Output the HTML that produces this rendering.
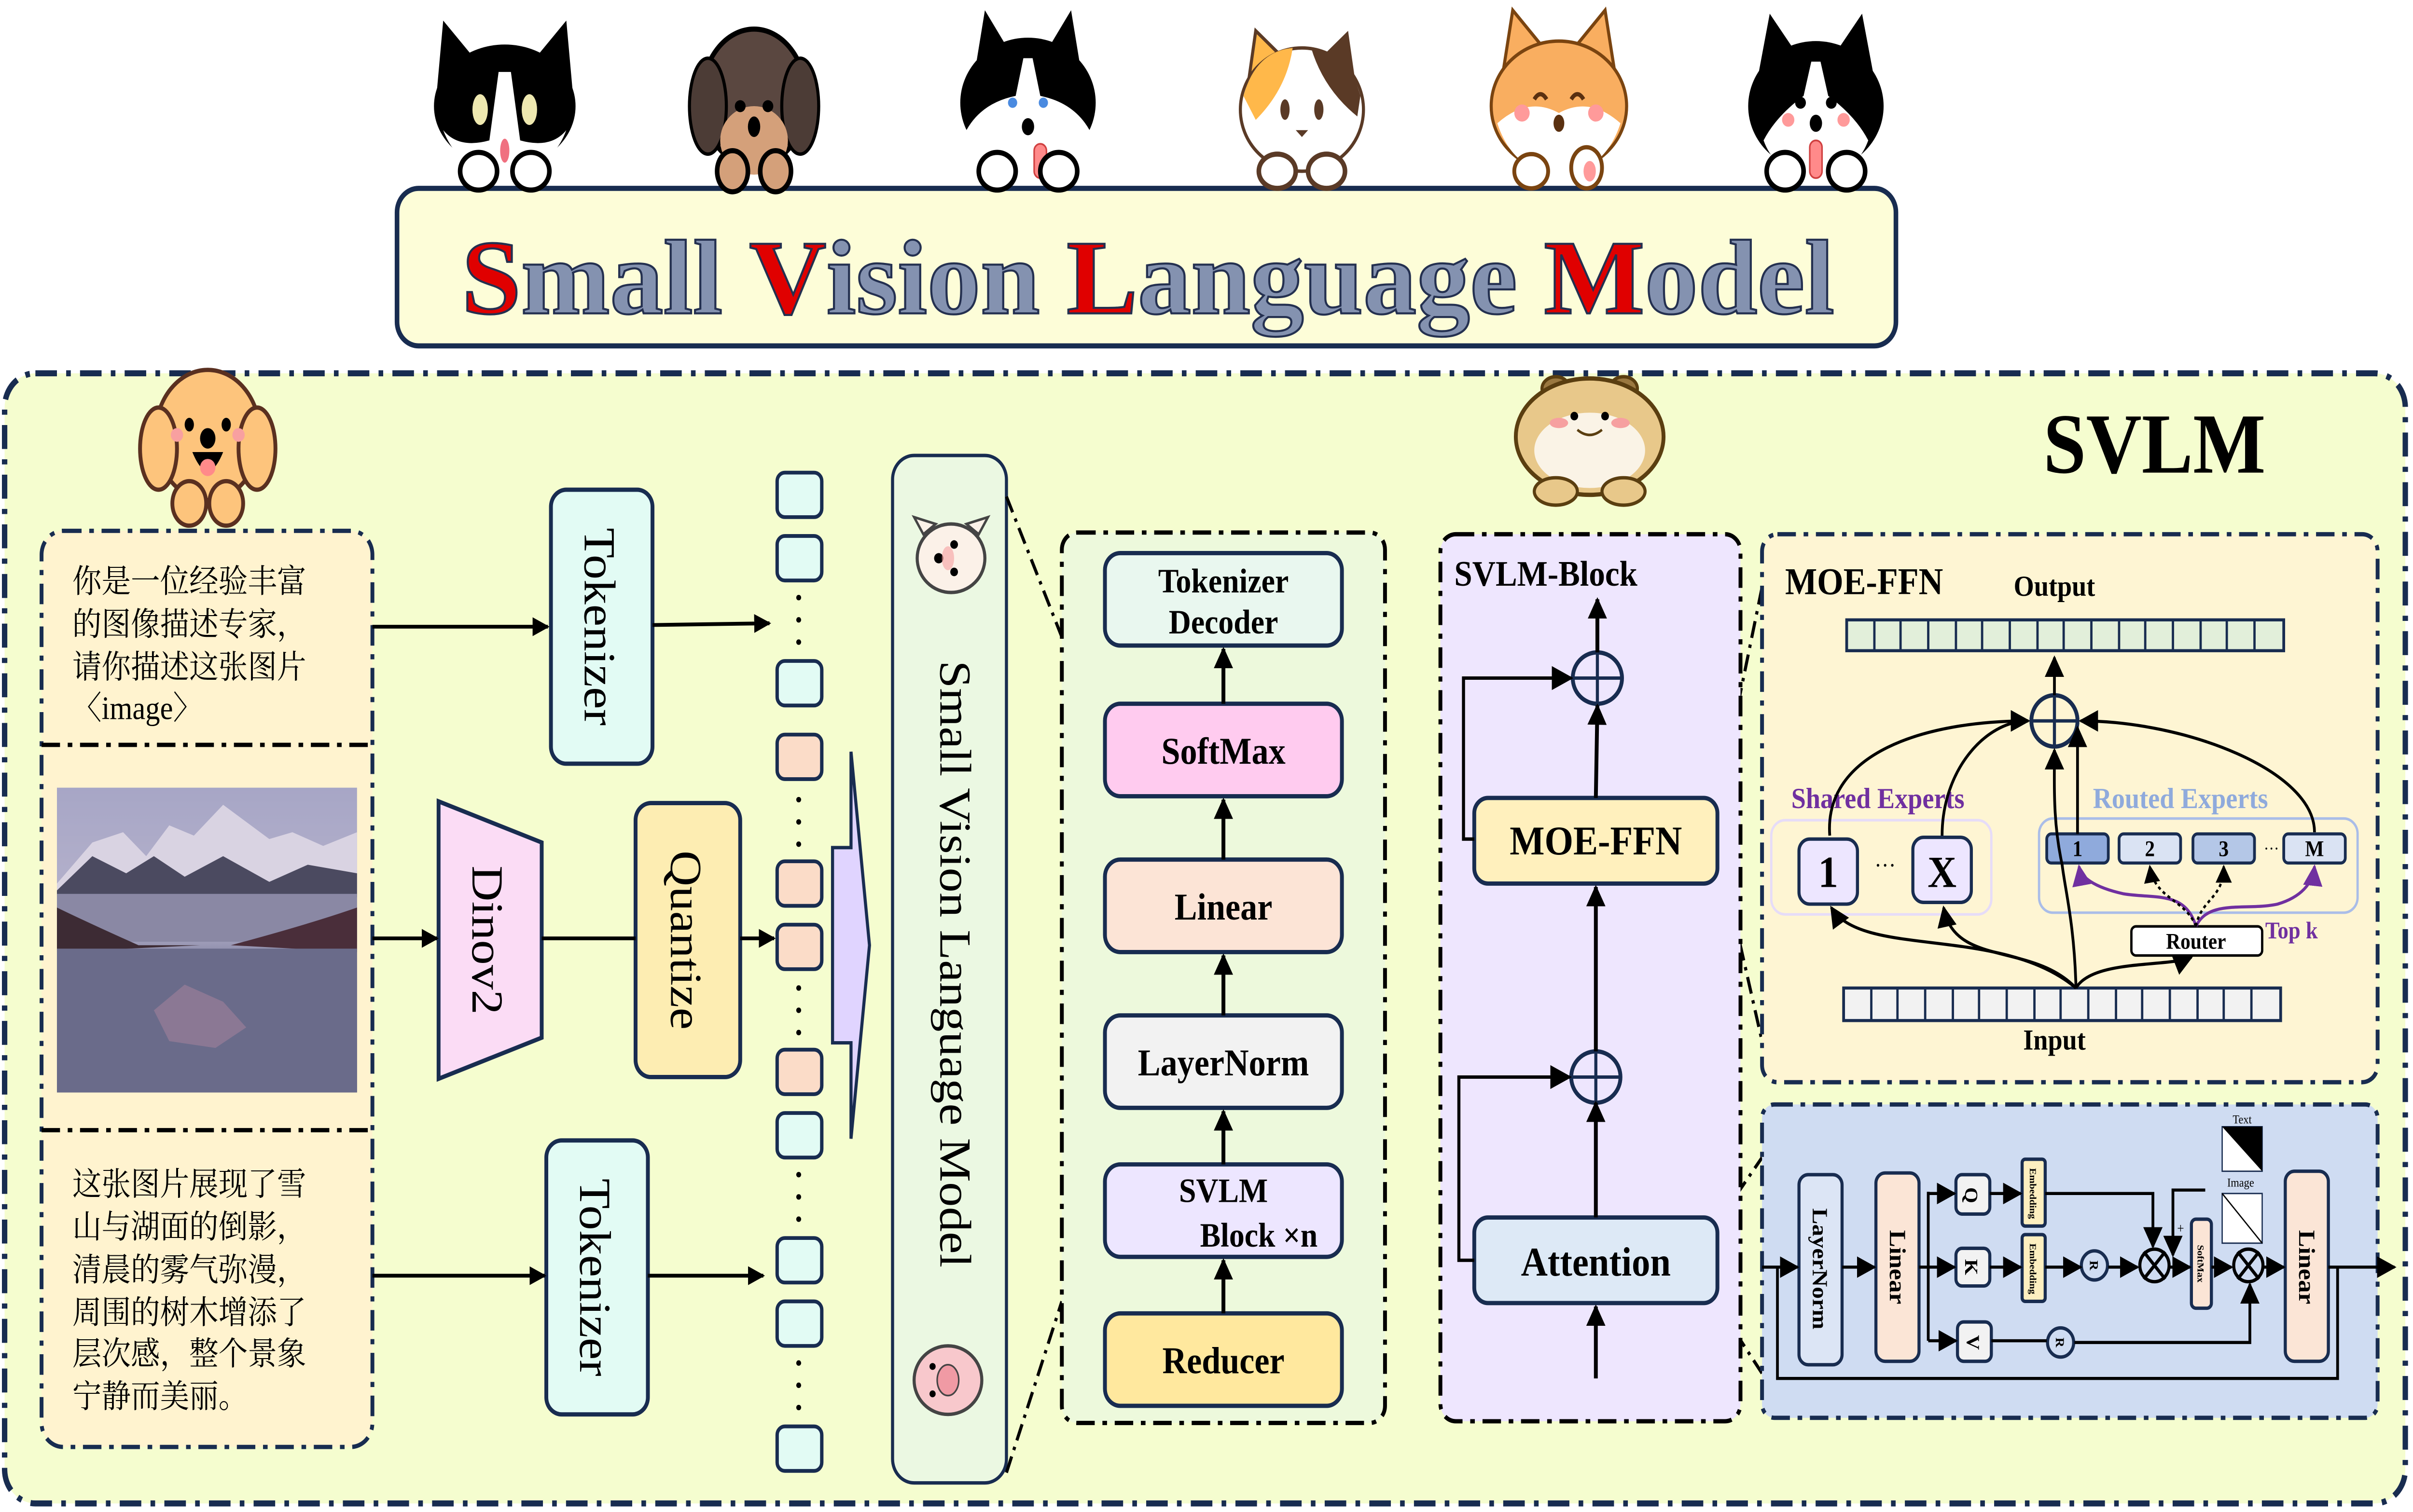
<!DOCTYPE html>
<html><head><meta charset="utf-8">
<style>
html,body{margin:0;padding:0;background:#fff;overflow:hidden;width:100%;height:100%;}
svg{display:block;position:fixed;left:0;top:0;width:100vw;height:100vh;}
text{font-family:"Liberation Serif","Noto Serif CJK SC",serif;}
.cjk{font-family:"Liberation Serif","Noto Serif CJK SC","Noto Sans CJK SC",serif;}
</style></head>
<body>
<svg viewBox="0 0 1568 883" preserveAspectRatio="none" xmlns="http://www.w3.org/2000/svg">
<defs>
<marker id="ah" viewBox="0 0 10 10" refX="9" refY="5" markerWidth="5" markerHeight="5" orient="auto"><path d="M0,0 L10,5 L0,10 z" fill="#000"/></marker>
<marker id="ahs" viewBox="0 0 10 10" refX="9" refY="5" markerWidth="7" markerHeight="7" orient="auto"><path d="M0,0 L10,5 L0,10 z" fill="#000"/></marker>
<marker id="ahp" viewBox="0 0 10 10" refX="9" refY="5" markerWidth="7" markerHeight="7" orient="auto"><path d="M0,0 L10,5 L0,10 z" fill="#7030a0"/></marker>
<linearGradient id="sky" x1="0" y1="0" x2="0" y2="1">
<stop offset="0" stop-color="#a7a6c6"/><stop offset="0.45" stop-color="#b7b3cc"/><stop offset="0.55" stop-color="#8a8aa8"/><stop offset="0.75" stop-color="#6e6f8e"/><stop offset="1" stop-color="#4b4d6c"/></linearGradient>
</defs>

<rect x="3" y="218" width="1560" height="660" rx="20" fill="#f5fdcf" stroke="#182c50" stroke-width="3.5" stroke-dasharray="14 6 3 6"/>

<rect x="258" y="110" width="974" height="92" rx="14" fill="#fdfdd8" stroke="#182c50" stroke-width="3"/>
<text x="300" y="183" font-size="62" font-weight="bold" textLength="892" lengthAdjust="spacingAndGlyphs" stroke="#243050" stroke-width="1.2"><tspan fill="#e00000">S</tspan><tspan fill="#8492b0">mall </tspan><tspan fill="#e00000">V</tspan><tspan fill="#8492b0">ision </tspan><tspan fill="#e00000">L</tspan><tspan fill="#8492b0">anguage </tspan><tspan fill="#e00000">M</tspan><tspan fill="#8492b0">odel</tspan></text>

<g transform="translate(328,62)">
<path d="M-44,-10 L-40,-50 L-18,-26 Z M44,-10 L40,-50 L18,-26 Z" fill="#000"/>
<ellipse cx="0" cy="0" rx="46" ry="36" fill="#000"/>
<path d="M-4,-20 L4,-20 L10,20 Q30,25 40,14 Q30,38 0,40 Q-30,38 -40,14 Q-30,25 -10,20 Z" fill="#fff"/>
<ellipse cx="-16" cy="2" rx="5" ry="9" fill="#eee8b0"/><ellipse cx="16" cy="2" rx="5" ry="9" fill="#eee8b0"/>
<ellipse cx="0" cy="26" rx="3" ry="7" fill="#f07080"/>
<ellipse cx="-17" cy="38" rx="12" ry="11" fill="#fff" stroke="#000" stroke-width="3"/><ellipse cx="17" cy="38" rx="12" ry="11" fill="#fff" stroke="#000" stroke-width="3"/>
</g>
<g transform="translate(490,62)">
<ellipse cx="0" cy="-5" rx="34" ry="40" fill="#5a4740" stroke="#000" stroke-width="3"/>
<ellipse cx="-30" cy="0" rx="12" ry="28" fill="#4c3c36" stroke="#000" stroke-width="2"/><ellipse cx="30" cy="0" rx="12" ry="28" fill="#4c3c36" stroke="#000" stroke-width="2"/>
<ellipse cx="0" cy="20" rx="22" ry="20" fill="#d4a07a"/>
<circle cx="-9" cy="0" r="3.5" fill="#000"/><circle cx="9" cy="0" r="3.5" fill="#000"/>
<ellipse cx="0" cy="12" rx="4" ry="6" fill="#000"/>
<ellipse cx="-14" cy="38" rx="10" ry="12" fill="#d4a07a" stroke="#000" stroke-width="3"/><ellipse cx="14" cy="38" rx="10" ry="12" fill="#d4a07a" stroke="#000" stroke-width="3"/>
</g>
<g transform="translate(668,60)">
<path d="M-36,-10 L-28,-54 L-12,-30 Z M36,-10 L28,-54 L12,-30 Z" fill="#000"/>
<ellipse cx="0" cy="0" rx="44" ry="38" fill="#000"/>
<path d="M-3,-26 L3,-26 L8,-4 Q30,0 40,16 Q30,40 0,42 Q-30,40 -40,16 Q-30,0 -8,-4 Z" fill="#fff"/>
<circle cx="-10" cy="0" r="3" fill="#4a8ae0"/><circle cx="10" cy="0" r="3" fill="#4a8ae0"/>
<ellipse cx="0" cy="14" rx="4" ry="5" fill="#000"/>
<rect x="4" y="24" width="8" height="20" rx="4" fill="#ff8a8a" stroke="#d04040"/>
<ellipse cx="-20" cy="40" rx="12" ry="11" fill="#fff" stroke="#000" stroke-width="3"/><ellipse cx="20" cy="40" rx="12" ry="11" fill="#fff" stroke="#000" stroke-width="3"/>
</g>
<g transform="translate(846,62)">
<path d="M-36,-6 L-30,-44 L-12,-28 Z" fill="#ffb84a" stroke="#5a3a26" stroke-width="2"/><path d="M36,-6 L30,-44 L12,-28 Z" fill="#5a3a26"/>
<ellipse cx="0" cy="2" rx="40" ry="36" fill="#fff" stroke="#5a3a26" stroke-width="2"/>
<path d="M-38,-6 Q-30,-32 -6,-34 Q-10,-10 -30,8 Z" fill="#ffb84a"/><path d="M38,-6 Q30,-32 6,-34 Q14,-10 36,6 Z" fill="#5a3a26"/>
<ellipse cx="-11" cy="2" rx="3" ry="6" fill="#5a3a26"/><ellipse cx="11" cy="2" rx="3" ry="6" fill="#5a3a26"/>
<path d="M-4,14 L4,14 L0,18 Z" fill="#5a3a26"/>
<ellipse cx="-16" cy="38" rx="12" ry="10" fill="#fff" stroke="#5a3a26" stroke-width="3"/><ellipse cx="16" cy="38" rx="12" ry="10" fill="#fff" stroke="#5a3a26" stroke-width="3"/>
</g>
<g transform="translate(1013,58)">
<path d="M-38,-6 L-30,-52 L-10,-30 Z M38,-6 L30,-52 L10,-30 Z" fill="#f9ae60" stroke="#7a4410" stroke-width="2"/>
<ellipse cx="0" cy="4" rx="44" ry="38" fill="#f9ae60" stroke="#7a4410" stroke-width="2"/>
<path d="M-40,14 Q-20,-2 0,8 Q20,-2 40,14 Q30,42 0,44 Q-30,42 -40,14 Z" fill="#fff"/>
<path d="M-16,0 q4,-6 8,0" stroke="#5a3010" stroke-width="2.5" fill="none"/><path d="M8,0 q4,-6 8,0" stroke="#5a3010" stroke-width="2.5" fill="none"/>
<circle cx="-24" cy="8" r="5" fill="#ff9a9a"/><circle cx="24" cy="8" r="5" fill="#ff9a9a"/>
<ellipse cx="0" cy="14" rx="3.5" ry="5" fill="#5a3010"/>
<ellipse cx="-18" cy="42" rx="11" ry="10" fill="#fff" stroke="#7a4410" stroke-width="2.5"/><ellipse cx="18" cy="40" rx="10" ry="12" fill="#fff" stroke="#7a4410" stroke-width="2.5"/>
<ellipse cx="20" cy="42" rx="4" ry="6" fill="#ff9a9a"/>
</g>
<g transform="translate(1180,60)">
<path d="M-40,-4 L-30,-52 L-12,-28 Z M40,-4 L30,-52 L12,-28 Z" fill="#000"/>
<ellipse cx="0" cy="2" rx="44" ry="38" fill="#000"/>
<path d="M-3,-24 L3,-24 L8,-4 Q26,8 34,22 Q26,42 0,44 Q-26,42 -34,22 Q-26,8 -8,-4 Z" fill="#fff"/>
<circle cx="-10" cy="0" r="3.5" fill="#000"/><circle cx="10" cy="0" r="3.5" fill="#000"/>
<circle cx="-18" cy="10" r="4" fill="#ff9a9a"/><circle cx="18" cy="10" r="4" fill="#ff9a9a"/>
<ellipse cx="0" cy="12" rx="4" ry="5" fill="#000"/>
<rect x="-4" y="22" width="8" height="22" rx="4" fill="#ff8a8a" stroke="#d04040"/>
<ellipse cx="-20" cy="40" rx="12" ry="11" fill="#fff" stroke="#000" stroke-width="3"/><ellipse cx="20" cy="40" rx="12" ry="11" fill="#fff" stroke="#000" stroke-width="3"/>
</g>

<!-- dog -->
<g transform="translate(135,258)">
<ellipse cx="0" cy="-4" rx="34" ry="38" fill="#fdc47c" stroke="#5a3020" stroke-width="2.5"/>
<ellipse cx="-32" cy="4" rx="12" ry="24" fill="#fdc47c" stroke="#5a3020" stroke-width="2.5"/><ellipse cx="32" cy="4" rx="12" ry="24" fill="#fdc47c" stroke="#5a3020" stroke-width="2.5"/>
<ellipse cx="-12" cy="-10" rx="3" ry="4" fill="#000"/><ellipse cx="12" cy="-10" rx="3" ry="4" fill="#000"/>
<circle cx="-20" cy="-4" r="4" fill="#f8a0a0"/><circle cx="20" cy="-4" r="4" fill="#f8a0a0"/>
<ellipse cx="0" cy="-2" rx="5" ry="6" fill="#000"/>
<path d="M-10,6 Q0,28 10,6 Z" fill="#000"/><ellipse cx="0" cy="15" rx="5" ry="5" fill="#ff8a8a"/>
<ellipse cx="-12" cy="36" rx="11" ry="13" fill="#fdc47c" stroke="#5a3020" stroke-width="2.5"/><ellipse cx="12" cy="36" rx="11" ry="13" fill="#fdc47c" stroke="#5a3020" stroke-width="2.5"/>
</g>

<text x="1400" y="276" font-size="50" font-weight="bold" text-anchor="middle">SVLM</text>

<rect x="27" y="310" width="215" height="535" rx="14" fill="#fff3cf" stroke="#182c50" stroke-width="2.5" stroke-dasharray="12 5 3 5"/>
<line x1="27" y1="435" x2="242" y2="435" stroke="#000" stroke-width="2.5" stroke-dasharray="12 5 3 5"/>
<line x1="27" y1="660" x2="242" y2="660" stroke="#000" stroke-width="2.5" stroke-dasharray="12 5 3 5"/>
<g font-size="19" fill="#000">
<text x="47" y="346" class="cjk">你是一位经验丰富</text>
<text x="47" y="371" class="cjk">的图像描述专家，</text>
<text x="47" y="396" class="cjk">请你描述这张图片</text>
<text x="47" y="420" class="cjk">〈image〉</text>
<text x="47" y="698" class="cjk">这张图片展现了雪</text>
<text x="47" y="723" class="cjk">山与湖面的倒影，</text>
<text x="47" y="748" class="cjk">清晨的雾气弥漫，</text>
<text x="47" y="773" class="cjk">周围的树木增添了</text>
<text x="47" y="797" class="cjk">层次感，整个景象</text>
<text x="47" y="822" class="cjk">宁静而美丽。</text>
</g>
<rect x="37" y="460" width="195" height="178" fill="url(#sky)"/>
<path d="M37,516 L60,492 L80,486 L95,500 L110,482 L126,488 L145,470 L160,480 L175,490 L190,486 L210,494 L232,486 L232,522 L37,522 Z" fill="#d9d3e2"/>
<path d="M37,520 L60,500 L82,510 L100,500 L120,512 L145,500 L175,515 L200,505 L232,510 L232,524 L37,524 Z" fill="#4b4a60"/>
<path d="M37,522 L232,522 L232,550 L37,550 Z" fill="#8a88a4"/>
<path d="M37,530 Q60,540 90,552 L130,552 L37,556 Z" fill="#3d2b34"/>
<path d="M232,530 Q200,540 150,552 L232,556 Z" fill="#4a2e3a"/>
<rect x="37" y="554" width="195" height="84" fill="#6a6b8a"/>
<path d="M100,590 L120,575 L145,585 L160,600 L140,612 L110,608 Z" fill="#9a7d98" opacity="0.7"/>

<rect x="358" y="286" width="66" height="160" rx="10" fill="#e2fbf4" stroke="#182c50" stroke-width="2.5"/>
<text transform="translate(380,366) rotate(90)" font-size="29" text-anchor="middle">Tokenizer</text>
<rect x="355" y="666" width="66" height="160" rx="10" fill="#e2fbf4" stroke="#182c50" stroke-width="2.5"/>
<text transform="translate(377,746) rotate(90)" font-size="29" text-anchor="middle">Tokenizer</text>
<polygon points="285,468 352,492 352,606 285,630" fill="#fbdcf5" stroke="#182c50" stroke-width="2.5"/>
<text transform="translate(307,549) rotate(90)" font-size="29" text-anchor="middle">Dinov2</text>
<rect x="413" y="469" width="68" height="160" rx="10" fill="#fdedb2" stroke="#182c50" stroke-width="2.5"/>
<text transform="translate(436,549) rotate(90)" font-size="29" text-anchor="middle">Quantize</text>

<g stroke="#000" stroke-width="2.2" fill="none">
<line x1="242" y1="366" x2="356" y2="366" marker-end="url(#ah)"/>
<line x1="424" y1="365" x2="500" y2="364" marker-end="url(#ah)"/>
<line x1="242" y1="548" x2="284" y2="548" marker-end="url(#ah)"/>
<line x1="352" y1="548" x2="413" y2="548"/>
<line x1="481" y1="548" x2="503" y2="548" marker-end="url(#ah)"/>
<line x1="242" y1="745" x2="354" y2="745" marker-end="url(#ah)"/>
<line x1="421" y1="745" x2="496" y2="745" marker-end="url(#ah)"/>
</g>

<g stroke="#182c50" stroke-width="2.2">
<rect x="505" y="276" width="29" height="26" rx="5" fill="#e2fbf4"/>
<rect x="505" y="313" width="29" height="26" rx="5" fill="#e2fbf4"/>
<rect x="505" y="386" width="29" height="26" rx="5" fill="#e2fbf4"/>
<rect x="505" y="429" width="29" height="26" rx="5" fill="#fbdcc8"/>
<rect x="505" y="503" width="29" height="26" rx="5" fill="#fbdcc8"/>
<rect x="505" y="540" width="29" height="26" rx="5" fill="#fbdcc8"/>
<rect x="505" y="613" width="29" height="26" rx="5" fill="#fbdcc8"/>
<rect x="505" y="650" width="29" height="26" rx="5" fill="#e2fbf4"/>
<rect x="505" y="723" width="29" height="26" rx="5" fill="#e2fbf4"/>
<rect x="505" y="760" width="29" height="26" rx="5" fill="#e2fbf4"/>
<rect x="505" y="833" width="29" height="26" rx="5" fill="#e2fbf4"/>
</g>
<g fill="#000">
<circle cx="519" cy="349" r="1.6"/><circle cx="519" cy="362" r="1.6"/><circle cx="519" cy="375" r="1.6"/>
<circle cx="519" cy="467" r="1.6"/><circle cx="519" cy="480" r="1.6"/><circle cx="519" cy="493" r="1.6"/>
<circle cx="519" cy="577" r="1.6"/><circle cx="519" cy="590" r="1.6"/><circle cx="519" cy="603" r="1.6"/>
<circle cx="519" cy="686" r="1.6"/><circle cx="519" cy="699" r="1.6"/><circle cx="519" cy="712" r="1.6"/>
<circle cx="519" cy="796" r="1.6"/><circle cx="519" cy="809" r="1.6"/><circle cx="519" cy="822" r="1.6"/>
</g>
<polygon points="541,495 553,495 553,439 565,552 553,665 553,609 541,609" fill="#e0d4ff" stroke="#182c50" stroke-width="2"/>

<rect x="580" y="266" width="74" height="600" rx="14" fill="#ebf8e2" stroke="#182c50" stroke-width="2"/>
<text transform="translate(611,563) rotate(90)" font-size="29" text-anchor="middle">Small Vision Language Model</text>
<g transform="translate(618,326)">
<path d="M-18,-14 L-24,-24 L-10,-20 Z M18,-14 L24,-24 L10,-20 Z" fill="#fbf1e8" stroke="#444" stroke-width="1.5"/>
<ellipse cx="0" cy="0" rx="22" ry="20" fill="#fbf1e8" stroke="#444" stroke-width="2"/>
<circle cx="2" cy="-8" r="2.5" fill="#000"/><circle cx="2" cy="8" r="2.5" fill="#000"/>
<circle cx="-8" cy="0" r="3" fill="#000"/><ellipse cx="-2" cy="0" rx="4" ry="7" fill="#f6a0a0" opacity="0.6"/>
</g>
<g transform="translate(616,806)">
<ellipse cx="0" cy="0" rx="22" ry="20" fill="#f8c8cc" stroke="#444" stroke-width="2"/>
<ellipse cx="0" cy="0" rx="7" ry="9" fill="#f09aa4" stroke="#444"/>
<circle cx="-10" cy="-8" r="2" fill="#000"/><circle cx="-10" cy="8" r="2" fill="#000"/>
</g>

<g stroke="#000" stroke-width="2" stroke-dasharray="10 4 2 4" fill="none">
<line x1="654" y1="290" x2="690" y2="372"/>
<line x1="654" y1="860" x2="690" y2="760"/>
<line x1="1116" y1="470" x2="1145" y2="343"/>
<line x1="1116" y1="493" x2="1145" y2="608"/>
<line x1="1116" y1="714" x2="1145" y2="676"/>
<line x1="1116" y1="762" x2="1145" y2="802"/>
</g>

<rect x="690" y="311" width="210" height="520" rx="10" fill="#edf9dc" stroke="#000" stroke-width="2.5" stroke-dasharray="12 5 3 5"/>
<g stroke="#182c50" stroke-width="2.5">
<rect x="718" y="323" width="154" height="54" rx="10" fill="#e9f7ef"/>
<rect x="718" y="411" width="154" height="54" rx="10" fill="#ffcbef"/>
<rect x="718" y="502" width="154" height="54" rx="10" fill="#fce4d6"/>
<rect x="718" y="593" width="154" height="54" rx="10" fill="#f2f2f2"/>
<rect x="718" y="680" width="154" height="54" rx="10" fill="#ede6ff"/>
<rect x="718" y="767" width="154" height="54" rx="10" fill="#ffe89e"/>
</g>
<g stroke="#000" stroke-width="2.5" marker-end="url(#ah)">
<line x1="795" y1="411" x2="795" y2="379"/>
<line x1="795" y1="502" x2="795" y2="467"/>
<line x1="795" y1="593" x2="795" y2="558"/>
<line x1="795" y1="680" x2="795" y2="649"/>
<line x1="795" y1="767" x2="795" y2="736"/>
</g>
<g font-weight="bold" text-anchor="middle">
<text x="795" y="346" font-size="20">Tokenizer</text>
<text x="795" y="370" font-size="20">Decoder</text>
<text x="795" y="446" font-size="22">SoftMax</text>
<text x="795" y="537" font-size="22">Linear</text>
<text x="795" y="628" font-size="22">LayerNorm</text>
<text x="795" y="702" font-size="20">SVLM</text>
<text x="818" y="728" font-size="20">Block  ×n</text>
<text x="795" y="802" font-size="22">Reducer</text>
</g>

<g transform="translate(1033,265)">
<ellipse cx="-22" cy="-38" rx="9" ry="7" fill="#9a7840" stroke="#5a3e10" stroke-width="2"/><ellipse cx="22" cy="-38" rx="9" ry="7" fill="#9a7840" stroke="#5a3e10" stroke-width="2"/>
<ellipse cx="0" cy="-10" rx="48" ry="34" fill="#e8c88a" stroke="#5a3e10" stroke-width="2.5"/>
<ellipse cx="0" cy="-2" rx="36" ry="22" fill="#faf3e6"/>
<circle cx="-10" cy="-22" r="2.5" fill="#000"/><circle cx="10" cy="-22" r="2.5" fill="#000"/>
<ellipse cx="-20" cy="-18" rx="6" ry="3" fill="#f6a0a0"/><ellipse cx="20" cy="-18" rx="6" ry="3" fill="#f6a0a0"/>
<path d="M-8,-14 q8,6 16,0" stroke="#5a3e10" stroke-width="1.5" fill="none"/>
<ellipse cx="-22" cy="22" rx="14" ry="8" fill="#e8c88a" stroke="#5a3e10" stroke-width="2"/><ellipse cx="22" cy="22" rx="14" ry="8" fill="#e8c88a" stroke="#5a3e10" stroke-width="2"/>
</g>

<rect x="936" y="312" width="195" height="518" rx="10" fill="#eee6fe" stroke="#000" stroke-width="2.5" stroke-dasharray="12 5 3 5"/>
<text x="945" y="342" font-size="21" font-weight="bold">SVLM-Block</text>
<rect x="958" y="466" width="158" height="50" rx="9" fill="#fff0bd" stroke="#182c50" stroke-width="2.5"/>
<text x="1037" y="499" font-size="24" font-weight="bold" text-anchor="middle">MOE-FFN</text>
<rect x="958" y="711" width="158" height="50" rx="9" fill="#dde9f6" stroke="#182c50" stroke-width="2.5"/>
<text x="1037" y="745" font-size="24" font-weight="bold" text-anchor="middle">Attention</text>
<ellipse cx="1038" cy="396" rx="16" ry="15" fill="none" stroke="#182c50" stroke-width="2.5"/>
<line x1="1022" y1="396" x2="1054" y2="396" stroke="#182c50" stroke-width="2"/>
<line x1="1038" y1="381" x2="1038" y2="411" stroke="#182c50" stroke-width="2"/>
<ellipse cx="1037" cy="629" rx="16" ry="15" fill="none" stroke="#182c50" stroke-width="2.5"/>
<line x1="1021" y1="629" x2="1053" y2="629" stroke="#182c50" stroke-width="2"/>
<line x1="1037" y1="614" x2="1037" y2="644" stroke="#182c50" stroke-width="2"/>
<g stroke="#000" stroke-width="2.5" fill="none">
<line x1="1037" y1="805" x2="1037" y2="763" marker-end="url(#ah)"/>
<line x1="1037" y1="711" x2="1037" y2="644" marker-end="url(#ah)"/>
<line x1="1037" y1="614" x2="1037" y2="518" marker-end="url(#ah)"/>
<line x1="1037" y1="466" x2="1038" y2="412" marker-end="url(#ah)"/>
<line x1="1038" y1="381" x2="1038" y2="350" marker-end="url(#ah)"/>
<polyline points="958,736 948,736 948,629 1020,629" stroke-width="2" marker-end="url(#ahs)"/>
<polyline points="958,490 951,490 951,396 1021,396" stroke-width="2" marker-end="url(#ahs)"/>
</g>

<rect x="1145" y="312" width="400" height="320" rx="10" fill="#fef5d3" stroke="#182c50" stroke-width="2.5" stroke-dasharray="12 5 3 5"/>
<text x="1160" y="347" font-size="22" font-weight="bold">MOE-FFN</text>
<text x="1335" y="348" font-size="17" font-weight="bold" text-anchor="middle">Output</text>
<g stroke="#182c50" stroke-width="1.8">
<rect x="1200" y="362" width="284" height="18" fill="#e2efda"/>
<rect x="1198" y="577" width="284" height="19" fill="#f2f2f2"/>
</g>
<g stroke="#182c50" stroke-width="1.5">
<path d="M1218,362v18M1235,362v18M1253,362v18M1271,362v18M1288,362v18M1306,362v18M1324,362v18M1341,362v18M1359,362v18M1377,362v18M1394,362v18M1412,362v18M1430,362v18M1447,362v18M1465,362v18"/>
<path d="M1216,577v19M1233,577v19M1251,577v19M1269,577v19M1286,577v19M1304,577v19M1322,577v19M1339,577v19M1357,577v19M1375,577v19M1392,577v19M1410,577v19M1428,577v19M1445,577v19M1463,577v19"/>
</g>
<circle cx="1335" cy="421" r="15" fill="none" stroke="#182c50" stroke-width="2.5"/>
<line x1="1320" y1="421" x2="1350" y2="421" stroke="#182c50" stroke-width="2"/><line x1="1335" y1="406" x2="1335" y2="436" stroke="#182c50" stroke-width="2"/>
<text x="1164" y="472" font-size="17" font-weight="bold" fill="#7030a0">Shared Experts</text>
<text x="1360" y="472" font-size="17" font-weight="bold" fill="#8faadc">Routed Experts</text>
<rect x="1151" y="479" width="143" height="55" rx="9" fill="none" stroke="#e6dcf8" stroke-width="1.5"/>
<rect x="1325" y="478" width="207" height="55" rx="9" fill="none" stroke="#aabde8" stroke-width="1.5"/>
<rect x="1169" y="490" width="38" height="38" rx="7" fill="#ede6ff" stroke="#182c50" stroke-width="2"/>
<rect x="1243" y="489" width="38" height="38" rx="7" fill="#ede6ff" stroke="#182c50" stroke-width="2"/>
<text x="1188" y="518" font-size="26" font-weight="bold" text-anchor="middle">1</text>
<text x="1262" y="518" font-size="26" font-weight="bold" text-anchor="middle">X</text>
<text x="1225" y="510" font-size="14" text-anchor="middle">···</text>
<g stroke="#182c50" stroke-width="1.8">
<rect x="1330" y="487" width="40" height="17" rx="3" fill="#8faadc"/>
<rect x="1377" y="487" width="40" height="17" rx="3" fill="#dae3f3"/>
<rect x="1425" y="487" width="40" height="17" rx="3" fill="#b4c7e7"/>
<rect x="1484" y="487" width="40" height="17" rx="3" fill="#dae3f3"/>
</g>
<g font-size="13" font-weight="bold" text-anchor="middle">
<text x="1350" y="500">1</text><text x="1397" y="500">2</text><text x="1445" y="500">3</text><text x="1504" y="500">M</text>
</g>
<text x="1476" y="499" font-size="10" text-anchor="middle">···</text>
<rect x="1385" y="541" width="85" height="17" rx="3" fill="#fff" stroke="#000" stroke-width="1.5"/>
<text x="1427" y="554" font-size="13" font-weight="bold" text-anchor="middle">Router</text>
<text x="1472" y="548" font-size="14" font-weight="bold" fill="#7030a0">Top k</text>
<text x="1335" y="613" font-size="17" font-weight="bold" text-anchor="middle">Input</text>
<g stroke="#000" stroke-width="1.8" fill="none">
<line x1="1335" y1="406" x2="1335" y2="384" marker-end="url(#ahs)"/>
<path d="M1349,577 C1300,540 1210,560 1190,530" marker-end="url(#ahs)"/>
<path d="M1349,577 C1320,550 1270,565 1263,530" marker-end="url(#ahs)"/>
<path d="M1349,577 C1360,560 1410,565 1424,559" marker-end="url(#ahs)"/>
<path d="M1349,577 C1348,540 1342,520 1340,505 C1334,480 1335,460 1335,438" marker-end="url(#ahs)"/>
<path d="M1350,487 L1350,425" marker-end="url(#ahs)"/>
<path d="M1189,488 C1185,440 1250,421 1318,421" marker-end="url(#ahs)"/>
<path d="M1262,488 C1262,450 1290,421 1318,421" marker-end="url(#ahs)"/>
<path d="M1504,486 C1504,450 1420,421 1352,421" marker-end="url(#ahs)"/>
</g>
<g stroke="#7030a0" stroke-width="1.8" fill="none">
<path d="M1427,541 C1420,520 1400,525 1380,522 C1360,518 1352,512 1351,506" marker-end="url(#ahp)"/>
<path d="M1427,541 C1435,525 1460,532 1480,528 C1495,524 1503,516 1504,506" marker-end="url(#ahp)"/>
</g>
<g stroke="#000" stroke-width="1.5" stroke-dasharray="2 2" fill="none">
<path d="M1427,541 C1420,525 1400,525 1397,506" marker-end="url(#ahs)"/>
<path d="M1427,541 C1430,525 1445,525 1445,506" marker-end="url(#ahs)"/>
</g>

<rect x="1145" y="645" width="400" height="183" rx="8" fill="#cfdcf2" stroke="#182c50" stroke-width="2.5" stroke-dasharray="12 5 3 5"/>
<g stroke="#182c50" stroke-width="2">
<rect x="1169" y="686" width="28" height="111" rx="6" fill="#dce5f5"/>
<rect x="1219" y="685" width="28" height="110" rx="6" fill="#fbe5d6"/>
<rect x="1485" y="684" width="28" height="111" rx="6" fill="#fbe5d6"/>
<rect x="1271" y="686" width="22" height="23" rx="4" fill="#f2f2f2"/>
<rect x="1271" y="729" width="22" height="22" rx="4" fill="#f2f2f2"/>
<rect x="1272" y="772" width="22" height="23" rx="4" fill="#f2f2f2"/>
<rect x="1314" y="677" width="15" height="39" rx="2" fill="#fdefc0"/>
<rect x="1314" y="721" width="15" height="39" rx="2" fill="#fdefc0"/>
<rect x="1424" y="712" width="13" height="52" rx="3" fill="#fbe5d6"/>
<circle cx="1361" cy="739" r="8.5" fill="#cfdcf2"/>
<circle cx="1339" cy="784" r="8.5" fill="#cfdcf2"/>
</g>
<g stroke="#000" stroke-width="2" fill="none">
<circle cx="1400" cy="739" r="9.5"/><path d="M1393,731 L1407,747 M1407,731 L1393,747"/>
<circle cx="1461" cy="739" r="9.5"/><path d="M1454,731 L1468,747 M1468,731 L1454,747"/>
</g>
<g font-weight="bold" text-anchor="middle">
<text transform="translate(1178,741) rotate(90)" font-size="14">LayerNorm</text>
<text transform="translate(1228,740) rotate(90)" font-size="15">Linear</text>
<text transform="translate(1494,740) rotate(90)" font-size="15">Linear</text>
<text transform="translate(1277,698) rotate(90)" font-size="12">Q</text>
<text transform="translate(1277,740) rotate(90)" font-size="12">K</text>
<text transform="translate(1278,784) rotate(90)" font-size="12">V</text>
<text transform="translate(1319,697) rotate(90)" font-size="6">Embedding</text>
<text transform="translate(1319,741) rotate(90)" font-size="6">Embedding</text>
<text transform="translate(1428,738) rotate(90)" font-size="6">SoftMax</text>
<text transform="translate(1358,739) rotate(90)" font-size="8">R</text>
<text transform="translate(1336,784) rotate(90)" font-size="8">R</text>
</g>
<text x="1457" y="656" font-size="7" text-anchor="middle">Text</text>
<rect x="1444" y="658" width="26" height="26" fill="#fff" stroke="#182c50" stroke-width="0.8"/>
<polygon points="1444,658 1470,658 1470,684" fill="#000"/>
<text x="1456" y="693" font-size="7" text-anchor="middle">Image</text>
<rect x="1444" y="697" width="26" height="29" fill="#fff" stroke="#182c50" stroke-width="0.8"/>
<line x1="1444" y1="697" x2="1470" y2="726" stroke="#000" stroke-width="0.8"/>
<text x="1417" y="720" font-size="8" text-anchor="middle">+</text>
<g stroke="#000" stroke-width="1.8" fill="none">
<line x1="1145" y1="740" x2="1168" y2="740" marker-end="url(#ahs)"/>
<line x1="1197" y1="740" x2="1218" y2="740" marker-end="url(#ahs)"/>
<polyline points="1247,740 1253,740"/>
<line x1="1253" y1="696" x2="1253" y2="783"/>
<line x1="1253" y1="697" x2="1270" y2="697" marker-end="url(#ahs)"/>
<line x1="1253" y1="740" x2="1270" y2="740" marker-end="url(#ahs)"/>
<line x1="1253" y1="783" x2="1271" y2="783" marker-end="url(#ahs)"/>
<line x1="1293" y1="697" x2="1313" y2="697" marker-end="url(#ahs)"/>
<line x1="1293" y1="740" x2="1313" y2="740" marker-end="url(#ahs)"/>
<line x1="1329" y1="740" x2="1352" y2="740" marker-end="url(#ahs)"/>
<line x1="1370" y1="740" x2="1389" y2="740" marker-end="url(#ahs)"/>
<polyline points="1329,697 1399,697 1399,728" marker-end="url(#ahs)"/>
<polyline points="1433,695 1412,695 1412,733" marker-end="url(#ahs)"/>
<line x1="1410" y1="740" x2="1423" y2="740" marker-end="url(#ahs)"/>
<line x1="1437" y1="740" x2="1450" y2="740" marker-end="url(#ahs)"/>
<line x1="1471" y1="740" x2="1484" y2="740" marker-end="url(#ahs)"/>
<polyline points="1294,783 1330,783"/>
<polyline points="1348,784 1462,784 1462,750" marker-end="url(#ahs)"/>
<line x1="1513" y1="740" x2="1556" y2="740" marker-end="url(#ahs)"/>
<polyline points="1155,740 1155,805 1519,805 1519,740"/>
</g>
</svg>
</body></html>
